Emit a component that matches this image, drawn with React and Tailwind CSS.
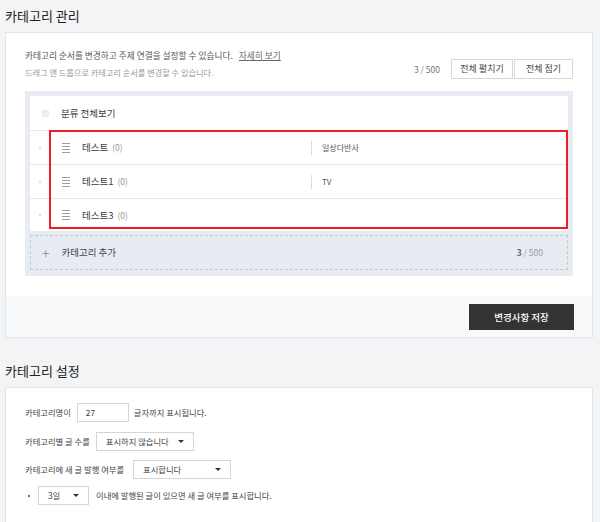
import React from "react";

const font = { fontFamily: '"Noto Sans CJK KR", "Noto Sans", sans-serif' };

function DragIcon() {
  return (
    <div className="flex w-[8px] flex-col gap-[2px]">
      <span className="h-px w-full bg-[#a0a0a0]" />
      <span className="h-px w-full bg-[#a0a0a0]" />
      <span className="h-px w-full bg-[#a0a0a0]" />
      <span className="h-px w-full bg-[#a0a0a0]" />
    </div>
  );
}

function Row({ name, topic, h }) {
  return (
    <div className={`flex ${h} items-center border-t border-[#e4e8ee]`}>
      <div className="flex w-[19px] justify-center">
        <span className="h-[2px] w-[2px] rounded-full bg-[#d0d4da]" />
      </div>
      <div className="ml-[13px] flex w-[249px] items-center">
        <DragIcon />
        <span className="ml-[12px] text-[9.5px] text-[#3a3a3a]">{name}</span>
        <span className="ml-[4px] text-[8.5px] text-[#999]">(0)</span>
      </div>
      <div className="flex items-center">
        <span className={`h-[14px] w-px ${topic ? "bg-[#dcdcdc]" : ""}`} />
        <span className="ml-[10px] text-[8px] text-[#555]">{topic}</span>
      </div>
    </div>
  );
}

function Select({ w, label }) {
  return (
    <div className={`flex h-[19px] ${w} items-center justify-between border border-[#d5d5d5] bg-white pl-[9px] pr-[9px]`}>
      <span className="whitespace-nowrap text-[8.3px] text-[#444]">{label}</span>
      <span className="h-0 w-0 border-x-[3px] border-t-[3px] border-x-transparent border-t-[#333]" />
    </div>
  );
}

export default function App() {
  return (
    <div className="h-[522px] w-[600px] overflow-hidden bg-[#f3f4f6] text-[#333]" style={font}>
      <h1 className="pl-[5px] pt-[6px] text-[13px] leading-[20px] text-[#222]">카테고리 관리</h1>
      <div className="ml-[5px] mt-[6px] w-[588px] border border-[#e2e5ea] bg-white">
        <div className="px-[19px] pb-[20px] pt-[15px]">
          <div className="flex items-end justify-between">
            <div>
              <p className="text-[8.7px] leading-[16px] text-[#555]">
                카테고리 순서를 변경하고 주제 연결을 설정할 수 있습니다.
                <span className="ml-[6px] text-[#666] underline">자세히 보기</span>
              </p>
              <p className="mt-[1px] text-[8.2px] leading-[14px] text-[#999]">
                드래그 앤 드롭으로 카테고리 순서를 변경할 수 있습니다.
              </p>
            </div>
            <div className="flex items-center">
              <span className="mr-[11px] text-[8.5px] text-[#777]">3 / 500</span>
              <button className="h-[20px] w-[62px] border border-[#d8d8d8] bg-white text-[9px] text-[#444]">전체 펼치기</button>
              <button className="ml-px h-[20px] w-[59px] border border-[#d8d8d8] bg-white text-[9px] text-[#444]">전체 접기</button>
            </div>
          </div>

          <div className="mt-[12px] bg-[#e7ebf2] px-[5px] pb-[6px] pt-[5px]">
            <div className="relative bg-white">
              <div className="flex h-[34px] items-center">
                <span className="ml-[12px] h-[7px] w-[7px] bg-[#eeeeee]" />
                <span className="ml-[12px] text-[9.5px] text-[#3a3a3a]">분류 전체보기</span>
              </div>
              <Row name="테스트" topic="일상다반사" h="h-[34px]" />
              <Row name="테스트1" topic="TV" h="h-[34px]" />
              <Row name="테스트3" topic="" h="h-[33px]" />
              <div className="pointer-events-none absolute left-[19px] right-0 top-[34px] h-[99px] border-2 border-[#ee1c25]" />
            </div>
            <div className="mt-[4px] flex h-[35px] items-center justify-between border border-dashed border-[#c4c9d1] pl-[11px] pr-[24px]">
              <div className="flex items-center">
                <span className="text-[14px] font-extralight leading-none text-[#888]">+</span>
                <span className="ml-[12px] text-[9.5px] text-[#444]">카테고리 추가</span>
              </div>
              <span className="text-[8.5px] text-[#999]">
                <span className="font-bold text-[#666]">3</span> / 500
              </span>
            </div>
          </div>
        </div>
        <div className="flex justify-end bg-[#f8f9fa] px-[18px] pb-[7px] pt-[8px]">
          <button className="h-[26px] w-[105px] bg-[#333333] text-[9.5px] font-medium text-white">변경사항 저장</button>
        </div>
      </div>

      <h2 className="pl-[5px] pt-[23px] text-[13px] leading-[20px] text-[#222]">카테고리 설정</h2>
      <div className="ml-[5px] mt-[6px] h-[200px] w-[588px] border border-[#e2e5ea] bg-white px-[19px] pt-[15px]">
        <div className="flex flex-col text-[8.3px] text-[#444]">
          <div className="flex h-[19px] items-center">
            <span>카테고리명이</span>
            <div className="ml-[6px] flex h-[19px] w-[52px] items-center border border-[#d5d5d5] pl-[8px]">27</div>
            <span className="ml-[5px]">글자까지 표시됩니다.</span>
          </div>
          <div className="mt-[10px] flex h-[19px] items-center">
            <span>카테고리별 글 수를</span>
            <div className="ml-[6px]"><Select w="w-[98px]" label="표시하지 않습니다" /></div>
          </div>
          <div className="mt-[9px] flex h-[19px] items-center">
            <span>카테고리에 새 글 발행 여부를</span>
            <div className="ml-[9px]"><Select w="w-[98px]" label="표시합니다" /></div>
          </div>
          <div className="mt-[7px] flex h-[19px] items-center">
            <span className="ml-[3px] h-[2px] w-[2px] rounded-full bg-[#444]" />
            <div className="ml-[8px]"><Select w="w-[51px]" label="3일" /></div>
            <span className="ml-[7px]">이내에 발행된 글이 있으면 새 글 여부를 표시합니다.</span>
          </div>
        </div>
      </div>
    </div>
  );
}
